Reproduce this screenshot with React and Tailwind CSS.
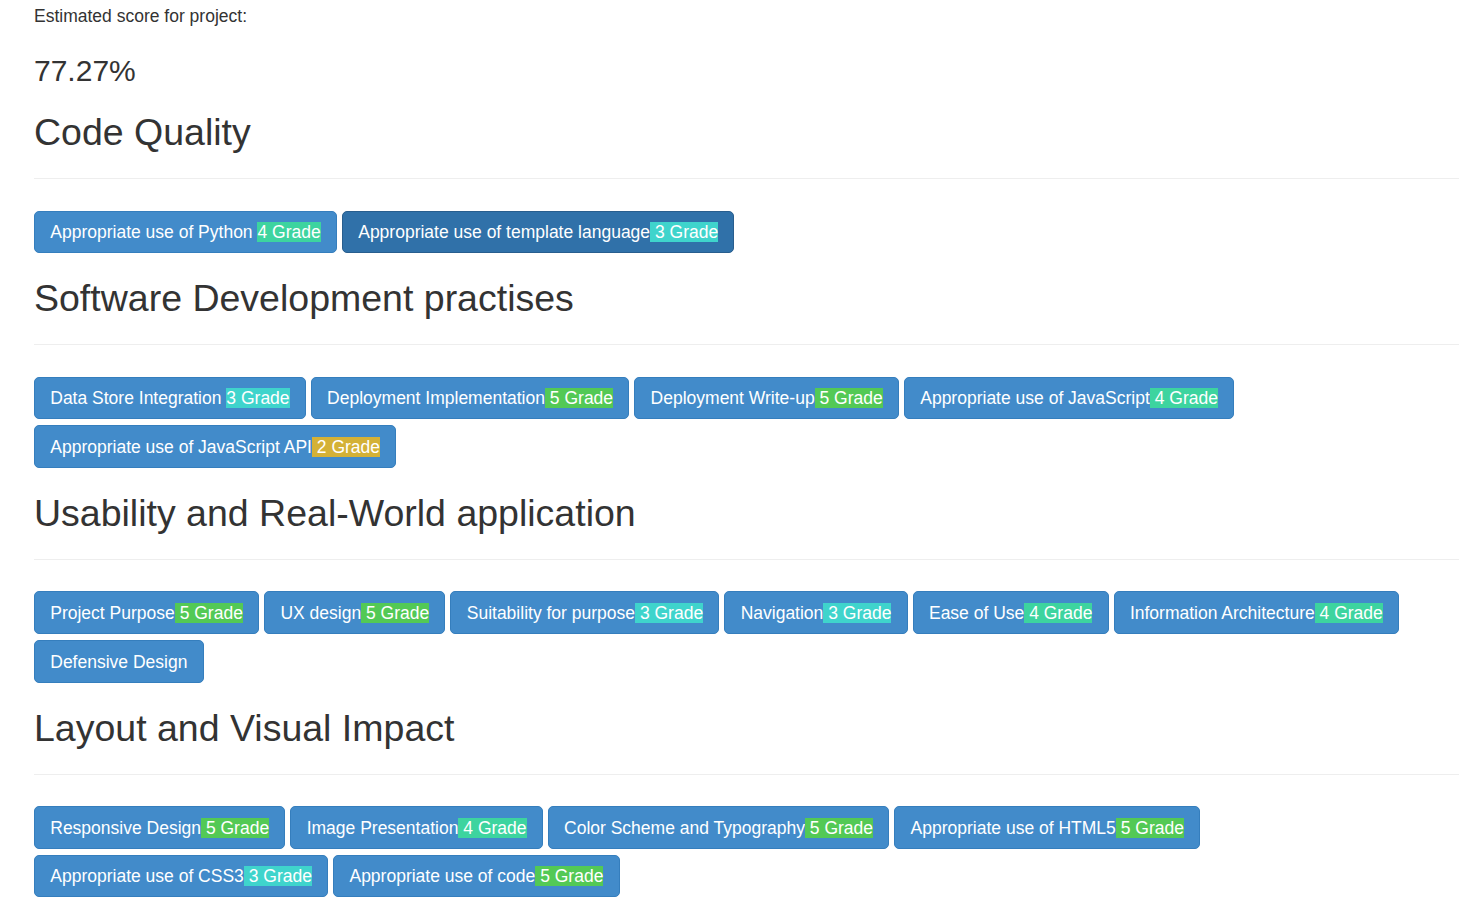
import React from "react";

const BADGE = {
  5: "bg-[#53c955]",
  4: "bg-[#3dd49f]",
  3: "bg-[#3fd4cc]",
  2: "bg-[#d4b136]",
};

const sections = [
  {
    title: "Code Quality",
    items: [
      { name: "Appropriate use of Python", grade: 4, sep: true },
      { name: "Appropriate use of template language", grade: 3, active: true },
    ],
  },
  {
    title: "Software Development practises",
    items: [
      { name: "Data Store Integration", grade: 3, sep: true },
      { name: "Deployment Implementation", grade: 5 },
      { name: "Deployment Write-up", grade: 5 },
      { name: "Appropriate use of JavaScript", grade: 4 },
      { name: "Appropriate use of JavaScript API", grade: 2 },
    ],
  },
  {
    title: "Usability and Real-World application",
    items: [
      { name: "Project Purpose", grade: 5 },
      { name: "UX design", grade: 5 },
      { name: "Suitability for purpose", grade: 3 },
      { name: "Navigation", grade: 3 },
      { name: "Ease of Use", grade: 4 },
      { name: "Information Architecture", grade: 4 },
      { name: "Defensive Design" },
    ],
  },
  {
    title: "Layout and Visual Impact",
    items: [
      { name: "Responsive Design", grade: 5 },
      { name: "Image Presentation", grade: 4 },
      { name: "Color Scheme and Typography", grade: 5 },
      { name: "Appropriate use of HTML5", grade: 5 },
      { name: "Appropriate use of CSS3", grade: 3 },
      { name: "Appropriate use of code", grade: 5 },
    ],
  },
];

function GradeButton({ item }) {
  const base =
    "mt-[6.25px] rounded-[5px] border px-[15.25px] pt-[8.5px] pb-[7px] text-[17.5px] leading-[25px] text-white whitespace-pre";
  const color = item.active
    ? "bg-[#3071a9] border-[#285e8e]"
    : "bg-[#428bca] border-[#357ebd]";
  return (
    <button type="button" className={`${base} ${color}`}>
      {item.name}
      {item.grade ? (item.sep ? " " : "") : ""}
      {item.grade ? (
        <span className={BADGE[item.grade]}>
          {item.sep ? "" : " "}
          {item.grade} Grade
        </span>
      ) : null}
    </button>
  );
}

export default function App() {
  return (
    <div
      className="min-h-screen bg-white pl-[34px] pr-[21px] pt-[4px] text-[#333333]"
      style={{ fontFamily: '"Liberation Sans", Arial, Helvetica, sans-serif' }}
    >
      <p className="text-[17.5px] leading-[25px]">Estimated score for project:</p>
      <h3 className="mt-[25px] mb-[12.5px] text-[30px] leading-[33px] font-normal">77.27%</h3>
      {sections.map((s) => (
        <section key={s.title}>
          <h2 className="mt-[25px] text-[37.5px] leading-[41.25px] font-normal">{s.title}</h2>
          <div className="mt-[25px] mb-[25px] border-t border-[#eeeeee]" />
          <div className="flex flex-wrap gap-x-[5px]">
            {s.items.map((it) => (
              <GradeButton key={it.name} item={it} />
            ))}
          </div>
        </section>
      ))}
    </div>
  );
}
